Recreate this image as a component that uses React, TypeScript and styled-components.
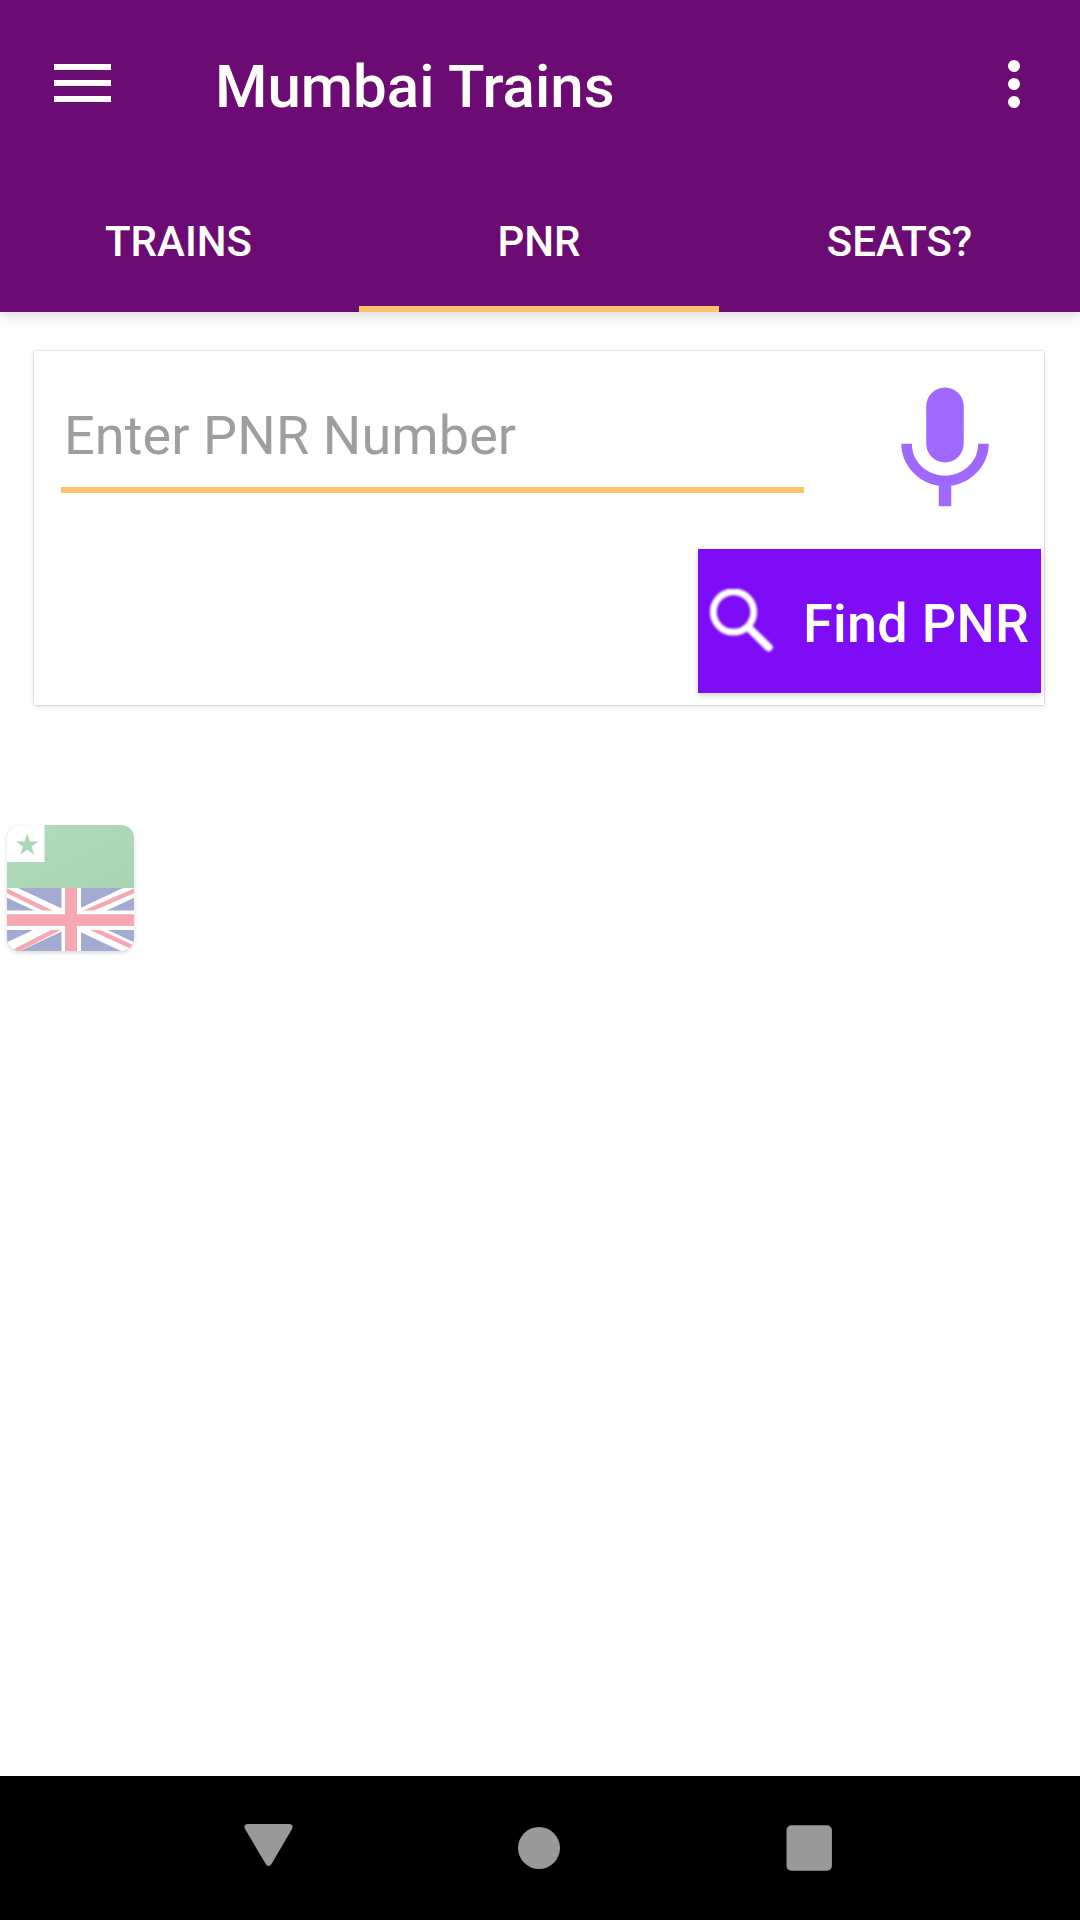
import React from "react";
import styled, { createGlobalStyle } from "styled-components";

const GlobalStyle = createGlobalStyle`
  *, *::before, *::after { box-sizing: border-box; }
  body {
    margin: 0;
    background: #fff;
    font-family: Roboto, "Noto Sans", sans-serif;
  }
  button { font-family: inherit; border: 0; padding: 0; background: none; }
  svg { display: block; flex: none; }
`;

const Screen = styled.div`
  width: 1080px;
  height: 1920px;
  display: flex;
  flex-direction: column;
  overflow: hidden;
  background: #fff;
`;

const AppBar = styled.header`
  flex: none;
  height: 312px;
  background: #6d0b74;
  color: #fffffa;
  box-shadow: 0 4px 12px rgba(0, 0, 0, 0.15);
`;

const Toolbar = styled.div`
  display: flex;
  align-items: center;
  height: 168px;
  padding: 0 60px 0 54px;
`;

const IconButton = styled.button`
  display: flex;
`;

const Title = styled.h1`
  flex: 1;
  margin: 0;
  padding: 5px 0 0 104px;
  font-size: 60px;
  line-height: 70px;
  font-weight: 500;
`;

const TabRow = styled.nav`
  display: grid;
  grid-template-columns: 359px 360px 361px;
  height: 144px;
`;

const Tab = styled.button<{ $active?: boolean }>`
  display: flex;
  align-items: center;
  justify-content: center;
  padding-top: ${(p) => (p.$active ? 9 : 3)}px;
  border-bottom: ${(p) => (p.$active ? "6px solid #fec26b" : "0")};
  color: #fffffa;
  font-size: 42px;
  line-height: 50px;
  font-weight: 500;
  &:first-child { padding-right: 2px; }
`;

const Content = styled.main`
  flex: 1;
  display: flex;
  flex-direction: column;
  align-items: flex-start;
  padding: 39px 36px 0 34px;
`;

const Card = styled.section`
  width: 1010px;
  height: 354px;
  display: flex;
  flex-direction: column;
  align-items: flex-end;
  padding: 23px 3px 0 27px;
  background: #fff;
  box-shadow: 0 0 2px rgba(0, 0, 0, 0.24), 0 2px 6px rgba(0, 0, 0, 0.1);
`;

const EntryRow = styled.div`
  width: 100%;
  height: 175px;
  display: flex;
  align-items: flex-start;
`;

const PnrInput = styled.input`
  width: 743px;
  height: 119px;
  padding: 10px 3px 0;
  border: 0;
  border-bottom: 6px solid #fec26b;
  outline: 0;
  background: none;
  color: #212121;
  font-family: inherit;
  font-size: 54px;
  line-height: 64px;
  letter-spacing: 0.1px;
  &::placeholder { color: #9e9e9e; opacity: 1; }
`;

const MicButton = styled(IconButton)`
  margin: 1px 0 0 66px;
`;

const FindButton = styled.button`
  display: flex;
  align-items: center;
  width: 343px;
  height: 144px;
  padding-left: 12px;
  gap: 29px;
  background: #7e0cf6;
  color: #fffffa;
  box-shadow: 0 2px 6px rgba(0, 0, 0, 0.2);
`;

const FindLabel = styled.span`
  padding-top: 5px;
  font-size: 54px;
  line-height: 64px;
  font-weight: 500;
  letter-spacing: 0.25px;
  white-space: nowrap;
`;

const LanguageButton = styled.button`
  width: 127px;
  height: 126px;
  margin: 120px 0 0 -27px;
  border-radius: 13px;
  overflow: hidden;
  box-shadow: 0 2px 4px rgba(0, 0, 0, 0.15);
`;

const NavBar = styled.footer`
  flex: none;
  display: grid;
  grid-template-columns: 275px 268px 46px;
  align-items: center;
  height: 144px;
  padding-left: 243px;
  background: #000;
`;

const MenuIcon = () => (
  <svg width="57" height="40" viewBox="0 0 57 40" fill="#fff">
    <path d="M0 0h57v6H0zM0 16h57v6H0zM0 32h57v6H0z" />
  </svg>
);

const MoreIcon = () => (
  <svg width="12" height="48" viewBox="0 0 12 48" fill="#fffffa">
    <circle cx="6" cy="6" r="6" />
    <circle cx="6" cy="24" r="6" />
    <circle cx="6" cy="42" r="6" />
  </svg>
);

const MicIcon = () => (
  <svg width="150" height="150" viewBox="0 0 24 24" fill="#9f68ff">
    <path d="M12 14c1.66 0 2.99-1.34 2.99-3L15 5c0-1.66-1.34-3-3-3S9 3.34 9 5v6c0 1.66 1.34 3 3 3zm5.3-3c0 3-2.54 5.1-5.3 5.1S6.7 14 6.7 11H5c0 3.41 2.72 6.23 6 6.72V21h2v-3.28c3.28-.48 6-3.3 6-6.72h-1.7z" />
  </svg>
);

const SoftSvg = styled.svg`
  filter: blur(0.9px);
`;

const SearchIcon = () => (
  <SoftSvg width="64" height="64" viewBox="0 0 64 64" fill="none" stroke="#fff">
    <circle cx="23.5" cy="23" r="20.2" strokeWidth="6.8" />
    <path d="M41 41L58.7 58.3" strokeWidth="8" strokeLinecap="round" />
  </SoftSvg>
);

const LanguageFlag = () => (
  <svg width="127" height="126" viewBox="0 0 127 126">
    <defs>
      <linearGradient id="green" x1="0" y1="0" x2="1" y2="1">
        <stop offset="0" stopColor="#b2dabb" />
        <stop offset="1" stopColor="#a9d4b3" />
      </linearGradient>
      <clipPath id="union"><path d="M0 63h127v63H0z" /></clipPath>
    </defs>
    <path d="M0 0h127v63H0z" fill="url(#green)" />
    <path d="M0 0h37.5v37H0z" fill="#fff" />
    <path d="M20.3 8.5l2.7 8.1h8.6l-7 5 2.7 8.1-7-5-7 5 2.7-8.1-7-5h8.6z" fill="#aad7b6" />
    <g clipPath="url(#union)">
      <path d="M0 63h127v63H0z" fill="#a4abd3" />
      <path
        d="M-10 60.6L63.5 95L137 60.6M-10 129.4L63.5 95L137 129.4"
        fill="none"
        stroke="#fff"
        strokeWidth="13.4"
      />
      <path d="M-8 62L50 90M135 62.4L72 89.7M0 130L56.8 101M136 127L80 101.3" stroke="#f5a8b1" strokeWidth="4.4" />
      <path d="M54.5 63h19.5v63H54.5zM0 85.5h127v19.5H0z" fill="#fff" />
      <path d="M58 63h12v63H58zM0 89.3h127v11.6H0z" fill="#f5a8b1" />
    </g>
  </svg>
);

const BackIcon = () => (
  <svg width="50" height="50" viewBox="0 0 50 50" fill="#999">
    <path d="M5 1H46Q51 1 49 6L28.5 41Q25.6 45 22.7 41L2 6Q0 1 5 1Z" />
  </svg>
);

const HomeIcon = () => (
  <svg width="42" height="42" viewBox="0 0 42 42" fill="#999">
    <circle cx="21" cy="21" r="21" />
  </svg>
);

const RecentsIcon = () => (
  <svg width="46" height="46" viewBox="0 0 46 46" fill="#999">
    <rect x=".5" y=".3" width="45.4" height="45.4" rx="5" />
  </svg>
);

export default function App() {
  return (
    <Screen>
      <GlobalStyle />
      <AppBar>
        <Toolbar>
          <IconButton aria-label="Menu"><MenuIcon /></IconButton>
          <Title>Mumbai Trains</Title>
          <IconButton aria-label="More options"><MoreIcon /></IconButton>
        </Toolbar>
        <TabRow>
          <Tab>TRAINS</Tab>
          <Tab $active>PNR</Tab>
          <Tab>SEATS?</Tab>
        </TabRow>
      </AppBar>
      <Content>
        <Card>
          <EntryRow>
            <PnrInput placeholder="Enter PNR Number" />
            <MicButton aria-label="Voice input"><MicIcon /></MicButton>
          </EntryRow>
          <FindButton>
            <SearchIcon />
            <FindLabel>Find PNR</FindLabel>
          </FindButton>
        </Card>
        <LanguageButton aria-label="Language"><LanguageFlag /></LanguageButton>
      </Content>
      <NavBar>
        <IconButton aria-label="Back"><BackIcon /></IconButton>
        <IconButton aria-label="Home"><HomeIcon /></IconButton>
        <IconButton aria-label="Recents"><RecentsIcon /></IconButton>
      </NavBar>
    </Screen>
  );
}
